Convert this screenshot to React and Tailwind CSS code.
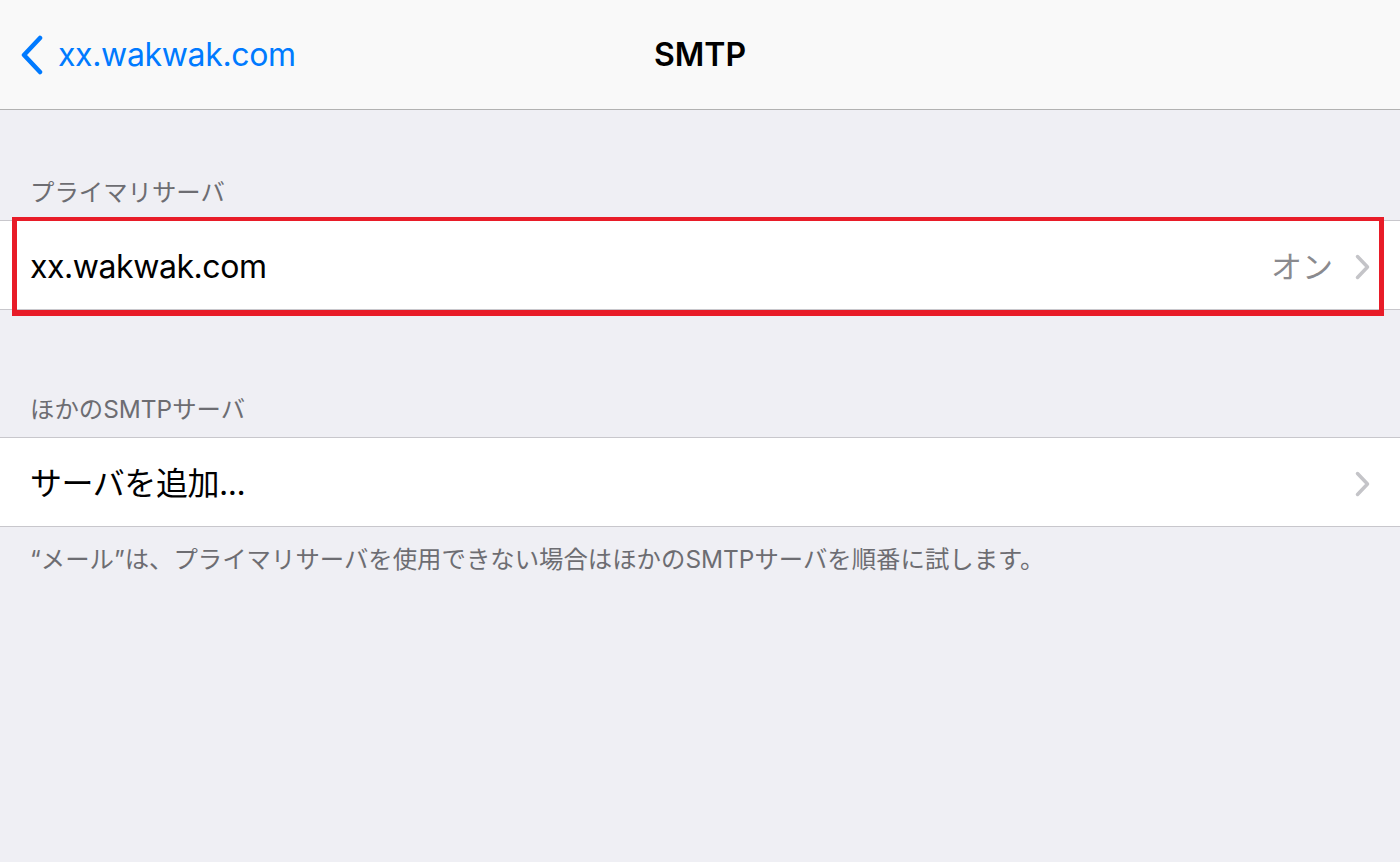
const font = { fontFamily: 'Inter, "Noto Sans CJK JP", sans-serif' };

function BackChevron() {
	return (
		<svg width="24" height="40" viewBox="0 0 24 40" className="shrink-0">
			<path
				d="M20 3 L4 20 L20 37"
				fill="none"
				stroke="#007aff"
				strokeWidth="4.5"
				strokeLinecap="round"
				strokeLinejoin="round"
			/>
		</svg>
	);
}

function Disclosure() {
	return (
		<svg width="15" height="26" viewBox="0 0 15 26" className="shrink-0">
			<path
				d="M2.5 2.5 L12.5 13 L2.5 23.5"
				fill="none"
				stroke="#c4c4c8"
				strokeWidth="3.5"
				strokeLinecap="round"
				strokeLinejoin="round"
			/>
		</svg>
	);
}

function SectionHeader({ children, height }) {
	return (
		<div
			className={`flex items-end px-[30px] text-[24.4px] leading-[32px] text-[#6d6d72] ${height}`}
		>
			{children}
		</div>
	);
}

function Row({ label, value, highlighted }) {
	return (
		<div className="relative bg-white border-y border-[#c8c7cc]">
			<div className="h-[88px] flex items-center pt-[4px] pl-[30px] pr-[30px]">
				<span className="flex-1 text-[32px] text-black tracking-[-0.45px]">{label}</span>
				{value && (
					<span className="text-[31px] text-[#8a8a8e] mr-[22px]">{value}</span>
				)}
				<Disclosure />
			</div>
			{highlighted && (
				<div className="absolute top-[-4px] bottom-[-7px] left-[12px] right-[16px] border-t-4 border-x-[5px] border-b-[6px] border-[#e81c28] pointer-events-none" />
			)}
		</div>
	);
}

export default function App() {
	return (
		<div className="w-[1400px] h-[862px] bg-[#efeff4] overflow-hidden" style={font}>
			{/* nav bar */}
			<div className="relative h-[110px] bg-[#f9f9f9] border-b border-[#b2b2b2] flex items-center">
				<div className="flex items-center pl-[20px] gap-[14px] text-[#007aff] text-[32px] tracking-[-0.35px]">
					<BackChevron />
					<span>xx.wakwak.com</span>
				</div>
				<div className="absolute inset-0 flex items-center justify-center text-[32px] font-semibold text-black pointer-events-none">
					SMTP
				</div>
			</div>

			<SectionHeader height="h-[110px] pb-[12px]">プライマリサーバ</SectionHeader>
			<Row label="xx.wakwak.com" value="オン" highlighted />

			<SectionHeader height="h-[127px] pb-[12px]">ほかのSMTPサーバ</SectionHeader>
			<Row label="サーバを追加..." />

			<div className="px-[30px] pt-[16px] text-[24.4px] leading-[32px] text-[#6d6d72]">
				“メール”は、プライマリサーバを使用できない場合はほかのSMTPサーバを順番に試します。
			</div>
		</div>
	);
}
